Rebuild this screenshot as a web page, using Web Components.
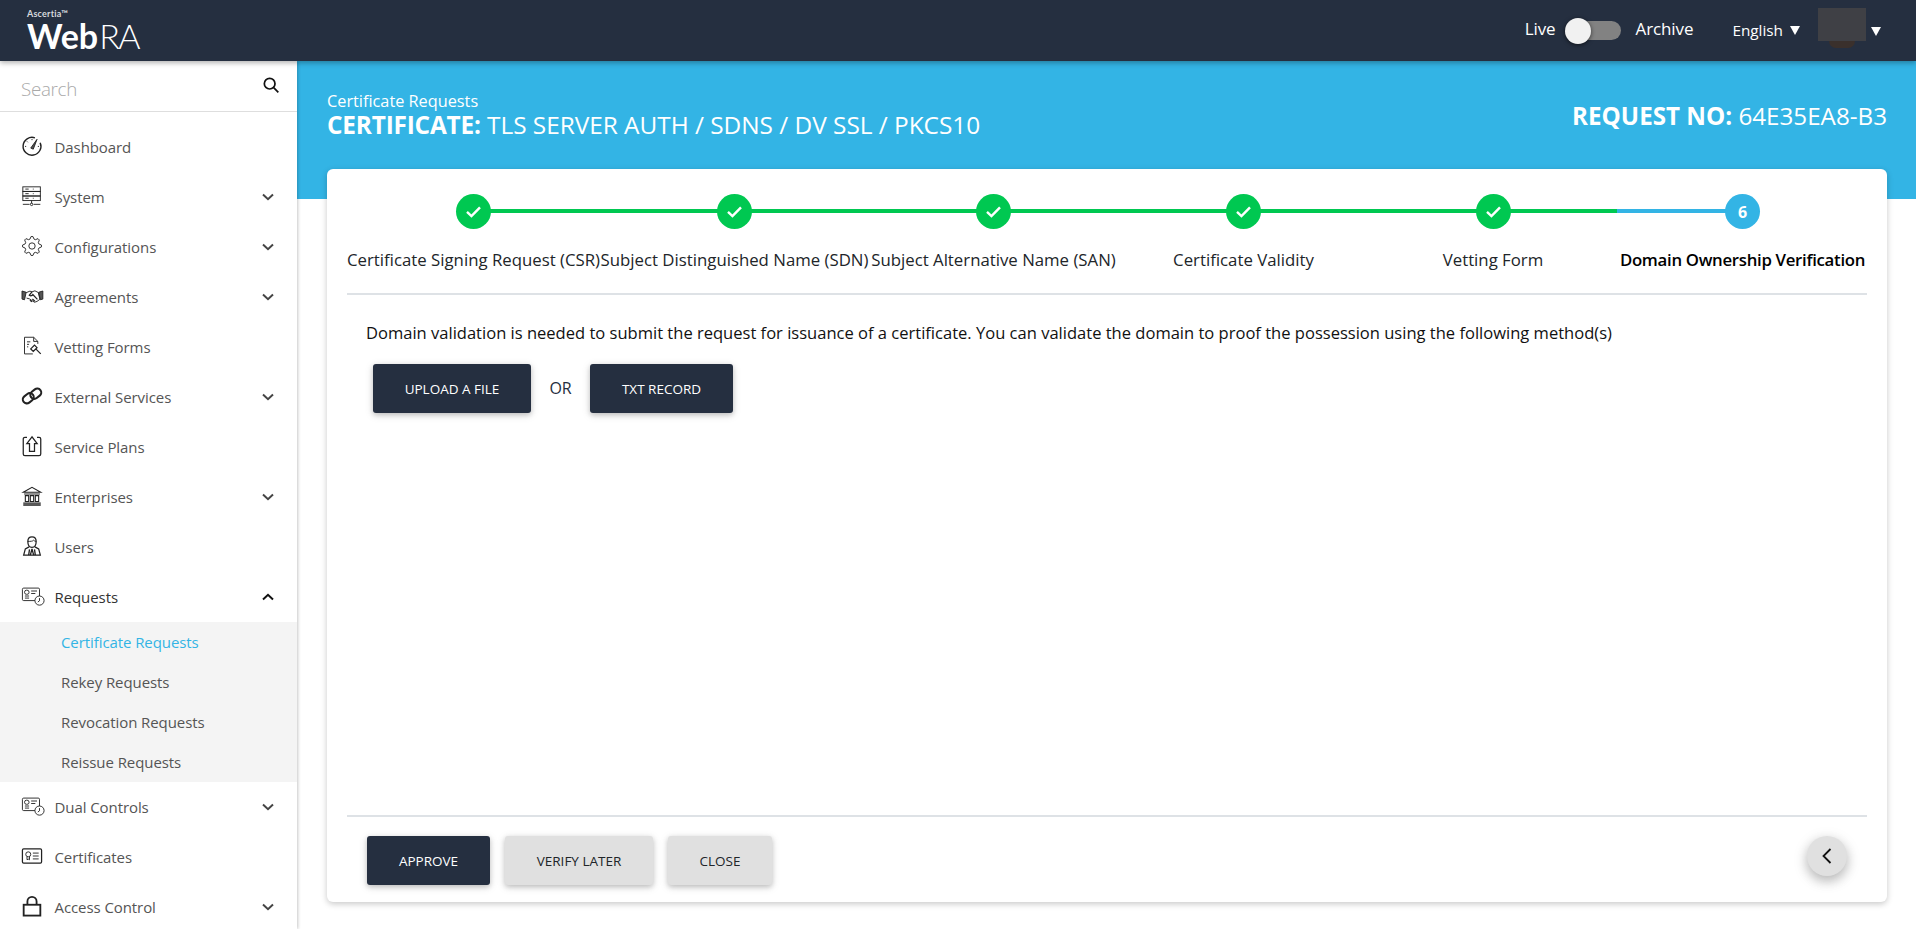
<!DOCTYPE html>
<html lang="en">
<head>
<meta charset="utf-8">
<title>WebRA - Certificate Requests</title>
<style>
  html, body { margin: 0; height: 100%; overflow: hidden; background: #fff; }
  body { font-family: "Open Sans", "Noto Sans", sans-serif; font-size: 15px; color: #212529; }
</style>
</head>
<body>
<wr-app>
  <wr-topbar slot="top"></wr-topbar>
  <wr-sidebar slot="side">
    <wr-nav-item icon="gauge">Dashboard</wr-nav-item>
    <wr-nav-item icon="server" caret="down">System</wr-nav-item>
    <wr-nav-item icon="gear" caret="down">Configurations</wr-nav-item>
    <wr-nav-item icon="hands" caret="down">Agreements</wr-nav-item>
    <wr-nav-item icon="form">Vetting Forms</wr-nav-item>
    <wr-nav-item icon="link" caret="down">External Services</wr-nav-item>
    <wr-nav-item icon="plan">Service Plans</wr-nav-item>
    <wr-nav-item icon="bank" caret="down">Enterprises</wr-nav-item>
    <wr-nav-item icon="user">Users</wr-nav-item>
    <wr-nav-item icon="request" caret="up">Requests</wr-nav-item>
    <wr-subnav>
      <wr-sub-item active>Certificate Requests</wr-sub-item>
      <wr-sub-item>Rekey Requests</wr-sub-item>
      <wr-sub-item>Revocation Requests</wr-sub-item>
      <wr-sub-item>Reissue Requests</wr-sub-item>
    </wr-subnav>
    <wr-nav-item icon="request" caret="down">Dual Controls</wr-nav-item>
    <wr-nav-item icon="cert">Certificates</wr-nav-item>
    <wr-nav-item icon="lock" caret="down">Access Control</wr-nav-item>
  </wr-sidebar>
  <wr-banner slot="banner"></wr-banner>
  <wr-card slot="card">
    <wr-stepper slot="steps">
      <wr-step done w="253">Certificate Signing Request (CSR)</wr-step>
      <wr-step done w="269">Subject Distinguished Name (SDN)</wr-step>
      <wr-step done w="249">Subject Alternative Name (SAN)</wr-step>
      <wr-step done w="251">Certificate Validity</wr-step>
      <wr-step done w="248">Vetting Form</wr-step>
      <wr-step current n="6" w="251">Domain Ownership Verification</wr-step>
    </wr-stepper>
    <wr-verify slot="body"></wr-verify>
    <wr-button slot="actions" kind="dark" w="123">APPROVE</wr-button>
    <wr-button slot="actions" kind="grey" w="148">VERIFY LATER</wr-button>
    <wr-button slot="actions" kind="grey" w="104">CLOSE</wr-button>
    <wr-back slot="back"></wr-back>
  </wr-card>
</wr-app>

<script>
/* Nav icons, all in a 24 box. Drawn by eye from the reference. */
const gearPath = (() => {
  const pts = [];
  for (let i = 0; i < 32; i++) {
    const r = [11.4, 11.4, 8.6, 8.6][i % 4];
    const a = (Math.PI * 2 * (i - 0.5)) / 32;
    pts.push(`${(12 + r * Math.cos(a)).toFixed(2)},${(12 + r * Math.sin(a)).toFixed(2)}`);
  }
  return `M${pts.join('L')}Z`;
})();

const ICONS = {
  gauge: '<path d="M15.500 2.200A10.700 10.700 0 1 0 21.800 8" stroke-width="1.700"/><path d="M10.500 14.500 18 4l-4.500 11.800z" fill="currentColor"/><path d="M5 12.500H3.600M7 7.500 6 6.500M12 5V3.600M20.400 12.500H19"/>',
  server: '<rect x="1" y="1" width="21" height="5.500"/><rect x="1" y="6.500" width="21" height="5.500"/><rect x="1" y="12" width="21" height="5.500"/><path d="M11.500 17.500V21M1 22h8M14 22h8M4 3.700h4M4 9.200h4M4 14.700h4M13 3.700h1M13 9.200h1M13 14.700h1" /><circle cx="11.500" cy="22" r="1.500"/>',
  gear: `<path d="${gearPath}"/><circle cx="12" cy="12" r="3.800"/>`,
  hands: '<path d="M0 6l5 1.500-2 9-3-.8zM25 6l-5 1.500 2 9 3-.8z" fill="currentColor"/><path d="M5 8l4.500-1.800 2.500.8 3.500-1.200 4 2 2 8.200-3.500 2.500-3 1-6-4-3.500-1"/><path d="M12 7 8.800 11c1.700 1.200 3.200.8 4.200-.7l5.500 5.700M9.500 17l2.500 2M12.500 15.500l3 2.700" stroke-width="1.500"/>',
  form: '<path d="M13 21.500H3v-20h11l5 5v3M14 1.500v5h5M6 7h4M6 10h2.500M6 13h1.500"/><path d="M10.500 15.500l4.500-4.500 3 3-4.500 4.500zM16.500 15.500l6 6" stroke-width="1.500"/>',
  link: '<g stroke-width="2.500"><rect x="0.500" y="10" width="14" height="9.500" rx="4.700" transform="rotate(-38 7.500 14.700)"/><rect x="9.500" y="4.500" width="14" height="9.500" rx="4.700" transform="rotate(-38 16.500 9.200)"/></g>',
  plan: '<path d="M6 1.500H3.500A2 2 0 0 0 1.500 3.500v18a2 2 0 0 0 2 2h17a2 2 0 0 0 2-2v-18a2 2 0 0 0-2-2H18" stroke-width="1.500"/><path d="M12 1 5.800 9H9v9.500h6V9h3.200z" stroke-width="1.500"/>',
  bank: '<path d="M1.500 7.500 12 1.500l10.500 6zM2.500 9.500h19M4 11.500h4v7H4zM10 11.500h4v7h-4zM16 11.500h4v7h-4zM1.500 20.500h21" stroke-width="1.300"/><path d="M1.500 22.800h21" stroke-width="1.800"/>',
  user: '<path d="M7 6.500C7 3 9 1 12 1s5 2 5 5.500c0 4-2 7-5 7s-5-3-5-7z" stroke-width="1.500"/><path d="M7 6.500c3 0 6 0 7-1.500 .5 1 2 1.500 3 1.500"/><path d="M8.500 13 4 15.500 2 23h20l-2-7.500-4.500-2.500" stroke-width="1.500"/><path d="M12 15.500l-2 7.500M12 15.500l2 7.500M9 16l-1 7M15 16l1 7" stroke-width="1.600"/>',
  request: '<rect x="0.500" y="2.500" width="20.500" height="15" rx="1.500"/><rect x="3" y="5" width="5.500" height="5" rx="2.500"/><path d="M3.500 14.500h5M3.500 12h5M11 6h7M11 9h5"/><circle cx="21" cy="17.500" r="5.500" fill="#fff"/><path d="M21 14.500v3.200l-2 1.600"/>',
  cert: '<rect x="0.500" y="3.500" width="23" height="17" rx="1.500" stroke-width="1.500"/><circle cx="7.500" cy="10" r="3"/><path d="M6 13v3.500l1.500-.8 1.500.8V13M13 8.500h7M13 12h7M13 15.500h7"/>',
  lock: '<rect x="2" y="10.500" width="20" height="13" stroke-width="2.200"/><path d="M6.500 10.500V6.500a5.500 5.500 0 0 1 11 0v4" stroke-width="2.200"/>'
};

class WrApp extends HTMLElement {
  constructor() {
    super();
    this.attachShadow({ mode: 'open' }).innerHTML = `
      <style>
        :host { display: flex; flex-direction: column; height: 929px; overflow: hidden; }
        .row { display: flex; flex: 1; min-height: 0; }
        .side { width: 297px; flex: none; z-index: 1; background: #fff; box-shadow: 1px 0 3px rgba(0,0,0,.22); overflow: hidden; }
        .main { flex: 1; min-width: 0; display: flex; flex-direction: column; }
        .card { margin: -30px 29px 27px 30px; flex: 1; min-height: 0; display: flex; }
        ::slotted([slot=top]) { z-index: 2; }
      </style>
      <slot name="top"></slot>
      <div class="row">
        <div class="side"><slot name="side"></slot></div>
        <div class="main">
          <slot name="banner"></slot>
          <div class="card"><slot name="card"></slot></div>
        </div>
      </div>`;
  }
}

class WrTopbar extends HTMLElement {
  constructor() {
    super();
    this.attachShadow({ mode: 'open' }).innerHTML = `
      <style>
        :host { display: flex; align-items: center; height: 61px; flex: none; background: #252f40; color: #fff; box-shadow: 0 2px 5px rgba(0,0,0,.3); position: relative; }
        .logo { margin-left: 27px; display: flex; flex-direction: column; font-family: Lato, sans-serif; }
        .logo small { font-size: 9px; line-height: 9px; font-weight: 700; letter-spacing: .2px; color: #d8dade; }
        .logo b { font-size: 34px; line-height: 33px; font-weight: 700; letter-spacing: 0; margin-top: 1px; }
        .logo b span { font-weight: 300; letter-spacing: -1.500px; margin-left: 1px; }
        .right { margin-left: auto; display: flex; align-items: center; font-size: 17px; letter-spacing: -.1px; }
        .mode { margin-bottom: 4px; }
        .track { width: 42px; height: 19px; border-radius: 10px; background: #828282; margin: 0 15px 0 23px; position: relative; }
        .knob { position: absolute; left: -14px; top: -3px; width: 26px; height: 26px; border-radius: 50%; background: #f1f1f1; box-shadow: 0 1px 4px rgba(0,0,0,.6); }
        .lang { margin-left: 39px; font-size: 15.300px; letter-spacing: 0; display: flex; align-items: center; gap: 7px; margin-bottom: 2px; }
        .tri { width: 0; height: 0; border-left: 5px solid transparent; border-right: 5px solid transparent; border-top: 9px solid #fff; margin-top: 2px; }
        .avatar { width: 48px; height: 33px; margin: 0 5px 12px 18px; background: #3f4045; position: relative; }
        .avatar::after { content: ""; position: absolute; left: 11px; bottom: -7px; width: 26px; height: 7px; border-radius: 0 0 13px 13px; background: #3a302c; }
        .last { margin-right: 35px; }
      </style>
      <div class="logo"><small>Ascertia™</small><b>Web<span>RA</span></b></div>
      <div class="right">
        <span class="mode">Live</span>
        <span class="track"><span class="knob"></span></span>
        <span class="mode">Archive</span>
        <span class="lang">English <span class="tri"></span></span>
        <span class="avatar"></span>
        <span class="tri last"></span>
      </div>`;
  }
}

class WrSidebar extends HTMLElement {
  constructor() {
    super();
    this.attachShadow({ mode: 'open' }).innerHTML = `
      <style>
        :host { display: block; }
        .search { display: flex; align-items: center; justify-content: space-between; height: 50px; padding: 0 18px 0 21px; border-bottom: 1px solid #dedede; }
        .search span { font-size: 18.800px; font-weight: 300; color: #a9a9a9; letter-spacing: -.3px; margin-top: 5px; }
        svg { width: 16px; height: 16px; fill: none; stroke: #111; stroke-width: 2.600; margin-top: -3px; }
        .list { padding-top: 10px; }
      </style>
      <div class="search">
        <span>Search</span>
        <svg viewBox="0 0 24 24"><circle cx="10" cy="10" r="8"/><path d="M16 16l7 7"/></svg>
      </div>
      <div class="list"><slot></slot></div>`;
  }
}

class WrNavItem extends HTMLElement {
  connectedCallback() {
    const icon = ICONS[this.getAttribute('icon')] || '';
    const caret = this.getAttribute('caret');
    const active = caret === 'up';
    const chevron = caret
      ? `<svg class="chev" viewBox="0 0 12 8"><path d="${caret === 'up' ? 'M1 6.500 6 1.800l5 4.700' : 'M1 1.500 6 6.200l5-4.700'}"/></svg>`
      : '';
    this.attachShadow({ mode: 'open' }).innerHTML = `
      <style>
        :host { display: flex; align-items: center; height: 50px; padding-left: 22px; padding-right: 23px; font-size: 15px; letter-spacing: -.08px; color: ${active ? '#333' : '#555'}; }
        .ico { width: 20px; height: 20px; flex: none; fill: none; stroke: #222; stroke-width: 1.100; overflow: visible; margin-right: 12.500px; margin-top: -3px; }
        .txt { flex: 1; }
        .chev { width: 12px; height: 8px; fill: none; stroke: ${active ? '#111' : '#444'}; stroke-width: 2; margin-top: -1px; }
      </style>
      <svg class="ico" viewBox="0 0 24 24">${icon}</svg>
      <span class="txt"><slot></slot></span>${chevron}`;
  }
}

class WrSubnav extends HTMLElement {
  constructor() {
    super();
    this.attachShadow({ mode: 'open' }).innerHTML = `
      <style>:host { display: block; background: #f4f4f4; }</style>
      <slot></slot>`;
  }
}

class WrSubItem extends HTMLElement {
  connectedCallback() {
    const active = this.hasAttribute('active');
    this.attachShadow({ mode: 'open' }).innerHTML = `
      <style>
        :host { display: flex; align-items: center; height: 40px; padding-left: 61px; font-size: 15px; letter-spacing: -.08px; color: ${active ? '#33b4e5' : '#555'}; }
      </style>
      <slot></slot>`;
  }
}

class WrBanner extends HTMLElement {
  constructor() {
    super();
    this.attachShadow({ mode: 'open' }).innerHTML = `
      <style>
        :host { display: flex; justify-content: space-between; align-items: center; height: 138px; flex: none; box-sizing: border-box; padding: 0 29px 30px 30px; background: #33b4e5; color: #fff; }
        .sub { font-size: 16.300px; line-height: 20px; }
        .title { font-size: 24.400px; line-height: 28px; letter-spacing: -.02px; }
        .title b { letter-spacing: -.2px; }
        .no { font-size: 24.200px; margin-top: 1px; }
        b { font-weight: 700; }
      </style>
      <div>
        <div class="sub">Certificate Requests</div>
        <div class="title"><b>CERTIFICATE:</b> TLS SERVER AUTH / SDNS / DV SSL / PKCS10</div>
      </div>
      <div class="no"><b>REQUEST NO:</b> 64E35EA8-B3</div>`;
  }
}

class WrCard extends HTMLElement {
  constructor() {
    super();
    this.attachShadow({ mode: 'open' }).innerHTML = `
      <style>
        :host { display: flex; flex-direction: column; flex: 1; min-width: 0; box-sizing: border-box; padding: 25px 20px 17px; background: #fff; border-radius: 6px; box-shadow: 0 2px 6px rgba(0,0,0,.22); }
        .body { flex: 1; min-height: 0; }
        .foot { display: flex; align-items: flex-start; gap: 15px; border-top: 2px solid #dee2e6; padding: 19px 20px 0; height: 49px; }
        .back { margin-left: auto; }
      </style>
      <slot name="steps"></slot>
      <div class="body"><slot name="body"></slot></div>
      <div class="foot"><slot name="actions"></slot><div class="back"><slot name="back"></slot></div></div>`;
  }
}

class WrStepper extends HTMLElement {
  constructor() {
    super();
    this.attachShadow({ mode: 'open' }).innerHTML = `
      <style>
        :host { display: flex; border-bottom: 2px solid #dee2e6; height: 99px; flex: none; }
      </style>
      <slot></slot>`;
  }
}

class WrStep extends HTMLElement {
  connectedCallback() {
    const done = this.hasAttribute('done');
    const n = this.getAttribute('n');
    const w = this.getAttribute('w');
    const first = !this.previousElementSibling;
    const last = !this.nextElementSibling;
    const colour = done ? '#00c851' : '#33b4e5';
    const mark = done
      ? '<svg viewBox="0 0 18 14"><path d="M2 7.500 6.800 12 16 2.500"/></svg>'
      : `<span>${n}</span>`;
    this.attachShadow({ mode: 'open' }).innerHTML = `
      <style>
        :host { display: flex; flex-direction: column; align-items: center; width: ${w}px; flex: none; }
        .track { position: relative; width: 100%; height: 35px; display: flex; justify-content: center; }
        .line { position: absolute; top: 15px; height: 4px; width: 50%; }
        .l { left: 0; background: ${first ? 'transparent' : colour}; }
        .r { right: 0; background: ${last ? 'transparent' : '#00c851'}; }
        .dot { position: relative; width: 35px; height: 35px; border-radius: 50%; background: ${colour}; color: #fff; display: flex; align-items: center; justify-content: center; font-size: 16px; font-weight: 700; }
        svg { width: 17px; height: 13px; fill: none; stroke: #fff; stroke-width: 2.600; }
        .label { margin-top: 20px; font-size: 16.800px; line-height: 22px; white-space: nowrap; letter-spacing: ${done ? 0 : '-.3px'}; color: ${done ? '#212529' : '#000'}; font-weight: ${done ? 400 : 600}; }
      </style>
      <div class="track"><i class="line l"></i><i class="line r"></i><div class="dot">${mark}</div></div>
      <div class="label"><slot></slot></div>`;
  }
}

class WrVerify extends HTMLElement {
  constructor() {
    super();
    this.attachShadow({ mode: 'open' }).innerHTML = `
      <style>
        :host { display: block; padding: 26px 19px 0; color: #111; }
        p { margin: 0; font-size: 16.550px; line-height: 24px; white-space: nowrap; }
        .row { display: flex; align-items: center; margin: 19px 0 0 7px; }
        .or { width: 59px; text-align: center; font-size: 16px; letter-spacing: -.2px; color: #252f40; margin-bottom: 2px; }
      </style>
      <p>Domain validation is needed to submit the request for issuance of a certificate. You can validate the domain to proof the possession using the following method(s)</p>
      <div class="row">
        <wr-button kind="dark" w="158">UPLOAD A FILE</wr-button>
        <span class="or">OR</span>
        <wr-button kind="dark" w="143">TXT RECORD</wr-button>
      </div>`;
  }
}

class WrButton extends HTMLElement {
  connectedCallback() {
    const dark = this.getAttribute('kind') === 'dark';
    this.attachShadow({ mode: 'open' }).innerHTML = `
      <style>
        :host { display: inline-flex; align-items: center; justify-content: center; flex: none; box-sizing: border-box; width: ${this.getAttribute('w')}px; height: 49px; border-radius: 3px; font-size: 13.500px; background: ${dark ? '#252f40' : '#e0e0e0'}; color: ${dark ? '#fff' : '#212529'}; box-shadow: 0 2px 5px rgba(0,0,0,.18), 0 2px 10px rgba(0,0,0,.12); }
      </style>
      <slot></slot>`;
  }
}

class WrBack extends HTMLElement {
  constructor() {
    super();
    this.attachShadow({ mode: 'open' }).innerHTML = `
      <style>
        :host { display: flex; align-items: center; justify-content: center; width: 40px; height: 40px; border-radius: 50%; background: #e0e0e0; box-shadow: 0 5px 11px rgba(0,0,0,.18), 0 4px 15px rgba(0,0,0,.15); }
        svg { width: 10px; height: 16px; fill: none; stroke: #111; stroke-width: 1.800; }
      </style>
      <svg viewBox="0 0 10 16"><path d="M8.500 1 1.500 8l7 7"/></svg>`;
  }
}

customElements.define('wr-button', WrButton);
customElements.define('wr-back', WrBack);
customElements.define('wr-verify', WrVerify);
customElements.define('wr-step', WrStep);
customElements.define('wr-stepper', WrStepper);
customElements.define('wr-card', WrCard);
customElements.define('wr-banner', WrBanner);
customElements.define('wr-sub-item', WrSubItem);
customElements.define('wr-subnav', WrSubnav);
customElements.define('wr-nav-item', WrNavItem);
customElements.define('wr-sidebar', WrSidebar);
customElements.define('wr-topbar', WrTopbar);
customElements.define('wr-app', WrApp);
</script>
</body>
</html>
